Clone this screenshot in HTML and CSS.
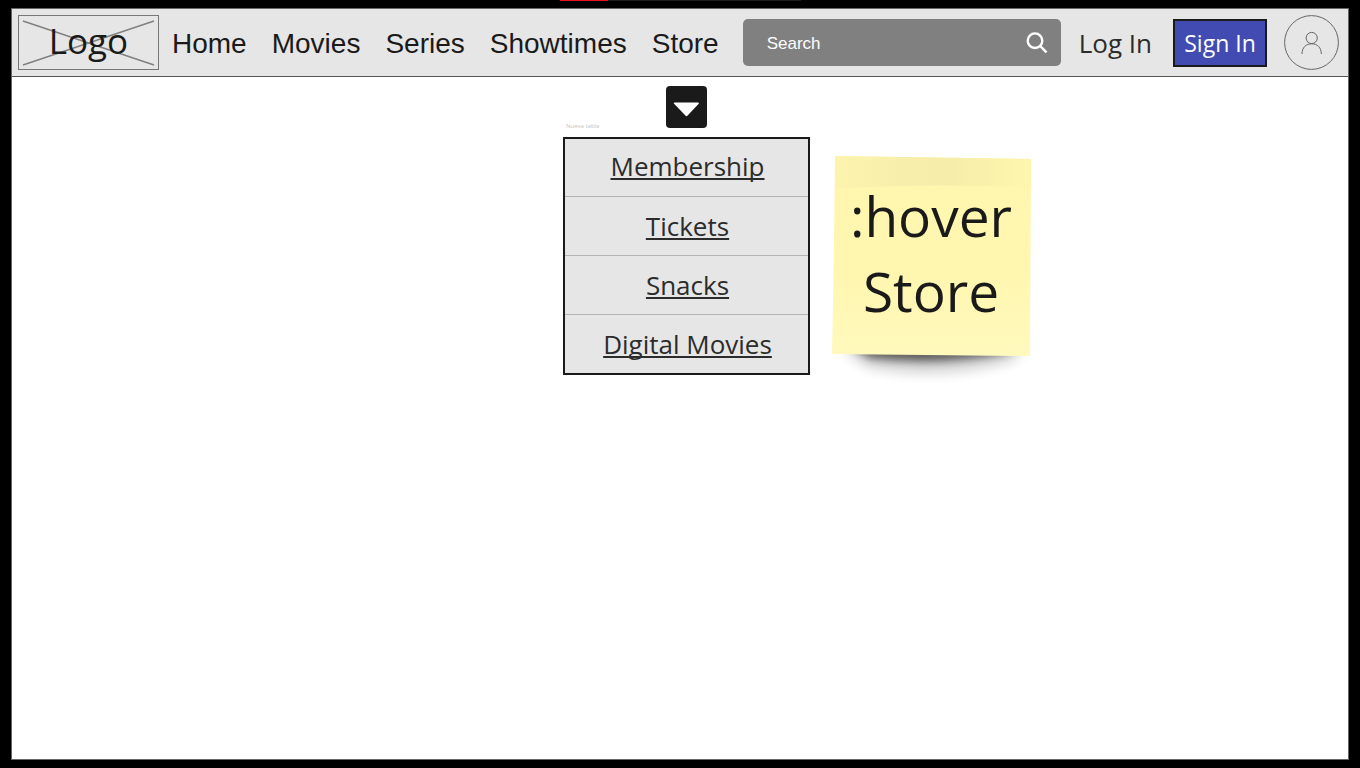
FILE: index.html
```html
<!DOCTYPE html>
<html lang="en">
<head>
<meta charset="utf-8">
<title>Store menu</title>
<link rel="stylesheet" href="styles.css">
</head>
<body>
<div class="progress"><div class="progress-done"></div></div>
<div class="frame">
  <header class="bar">
    <a class="logo" href="#">
      <svg class="logo-cross" viewBox="0 0 139 53" preserveAspectRatio="none" aria-hidden="true"><path d="M4 5L135 49M135 5L4 49"/></svg>
      <span class="logo-text">Logo</span>
    </a>
    <nav class="nav">
      <a href="#">Home</a>
      <a href="#">Movies</a>
      <a href="#">Series</a>
      <a href="#">Showtimes</a>
      <a href="#">Store</a>
    </nav>
    <form class="search">
      <input class="search-input" type="search" placeholder="Search" aria-label="Search">
      <button class="search-button" type="button" aria-label="Search">
        <svg width="22" height="22" viewBox="0 0 22 22"><circle cx="9" cy="8.7" r="7.3"/><path d="M14.2 14L20.5 20.3"/></svg>
      </button>
    </form>
    <a class="login" href="#">Log In</a>
    <button class="signin" type="button">Sign In</button>
    <button class="avatar" type="button" aria-label="Profile">
      <svg width="55" height="55" viewBox="0 0 55 55"><circle cx="27.5" cy="27.5" r="26.9"/><circle cx="27.7" cy="23" r="5.6"/><path d="M18 39C18 32.5 22 28.8 27.7 28.8S37.3 32.5 37.3 39"/></svg>
    </button>
  </header>
  <main class="canvas">
    <section class="dropdown">
      <button class="toggle" type="button" aria-label="Toggle store menu">
        <svg width="41" height="41" viewBox="0 0 41 41"><path d="M8.5 15.5H32C33 15.5 33.2 16.4 32.5 17.1L21.6 28.6Q20.5 29.8 19.4 28.6L8.3 17.1C7.5 16.4 7.7 15.5 8.5 15.5Z"/></svg>
      </button>
      <p class="caption">Nueva tabla</p>
      <ul class="menu">
        <li><a href="#">Membership</a></li>
        <li><a href="#">Tickets</a></li>
        <li><a href="#">Snacks</a></li>
        <li><a href="#">Digital Movies</a></li>
      </ul>
    </section>
    <aside class="note">
      <svg class="note-paper" width="230" height="260" viewBox="0 0 230 260" aria-hidden="true">
        <defs>
          <linearGradient id="paper" x1="0" y1="0" x2="0" y2="1"><stop offset="0" stop-color="#fff6ae"/><stop offset=".6" stop-color="#fff7b0"/><stop offset="1" stop-color="#fff9bc"/></linearGradient>
          <linearGradient id="strip" x1="0" y1="0" x2="1" y2="0"><stop offset="0" stop-color="#fcf4ae"/><stop offset=".35" stop-color="#f6eeaa"/><stop offset=".6" stop-color="#f5eda9"/><stop offset="1" stop-color="#fff6ae"/></linearGradient>
          <filter id="soft" x="-20%" y="-100%" width="140%" height="300%"><feGaussianBlur stdDeviation="6"/></filter>
          <filter id="near" x="-20%" y="-100%" width="140%" height="300%"><feGaussianBlur stdDeviation="4"/></filter>
        </defs>
        <path d="M22 212L205 213L192 222Q120 242 48 228Z" fill="#000" opacity=".16" filter="url(#soft)"/>
        <path d="M26 205L202 207L184 214Q115 226 50 218Z" fill="#000" opacity=".6" filter="url(#near)"/>
        <path d="M15 16L211 19L210 216L12 214Q14 120 15 16Z" fill="url(#paper)"/>
        <path d="M15 16L211 19L211 47Q90 43 15 49Z" fill="url(#strip)"/>
      </svg>
      <p class="note-text">:hover<br>Store</p>
    </aside>
  </main>
</div>
</body>
</html>
```
FILE: styles.css
```css
* { box-sizing: border-box; }
body {
  margin: 0;
  min-height: 100vh;
  display: flex;
  flex-direction: column;
  background: #000;
  color: #1a1a1a;
  font-family: "Open Sans", "Noto Sans", sans-serif;
}
a { color: inherit; text-decoration: none; }
button { padding: 0; border: 0; background: none; color: inherit; font: inherit; cursor: pointer; }
svg { display: block; }

.progress { width: 241px; height: 1px; margin: 0 auto; background: #1c1c1c; }
.progress-done { width: 20%; height: 1px; background: #e81123; }

.frame {
  flex: 1;
  display: flex;
  flex-direction: column;
  margin: 7px 11px 8px;
  border: 1px solid #666;
  background: #fff;
}
.bar {
  display: flex;
  align-items: center;
  height: 68px;
  padding: 0 9px 0 6px;
  background: #e6e6e6;
  border-bottom: 1px solid #555;
}
.logo {
  position: relative;
  display: flex;
  justify-content: center;
  width: 141px;
  height: 55px;
  border: 1px solid #777;
}
.logo-cross { position: absolute; inset: 0; width: 100%; height: 100%; fill: none; stroke: #808080; stroke-width: 1.4; }
.logo-text { position: relative; font-size: 35px; line-height: 50px; }
.nav {
  display: flex;
  gap: 25px;
  margin: 0 24px 0 13px;
  padding-top: 2px;
  font: 28px/32px "Liberation Sans", Arial, sans-serif;
}
.search {
  flex: 1;
  display: flex;
  align-items: center;
  min-width: 0;
  height: 47px;
  padding: 0 13px 0 24px;
  border-radius: 5px;
  background: #808080;
}
.search-input {
  flex: 1;
  min-width: 0;
  padding: 2px 0 0;
  border: 0;
  outline: 0;
  background: none;
  color: #fff;
  font: 17px/20px "Liberation Sans", Arial, sans-serif;
}
.search-input::placeholder { color: #fff; opacity: 1; }
.search-button svg { fill: none; stroke: #fff; stroke-width: 2.4; }
.login { margin: 0 21px 0 18px; color: #2c2c2c; font-size: 26px; line-height: 34px; white-space: nowrap; }
.signin {
  width: 94px;
  height: 48px;
  border: 2px solid #1a1a1a;
  background: #414bb2;
  color: #fff;
  font-size: 23px;
  line-height: 40px;
  white-space: nowrap;
}
.avatar { margin-left: 17px; }
.avatar svg { fill: none; stroke: #666; stroke-width: 1; }

.canvas { display: flex; align-items: flex-start; gap: 10px; padding: 9px 0 0 551px; }
.dropdown { display: grid; width: 247px; }
.toggle { grid-area: 1 / 1; justify-self: center; width: 41px; height: 42px; margin-bottom: 9px; border-radius: 4px; background: #1a1a1a; }
.toggle svg { fill: #fff; }
.caption { grid-area: 1 / 1; align-self: end; justify-self: start; margin: 0 0 7px 3px; font-size: 6px; line-height: 8px; color: #c4c4c4; }
.menu { margin: 0; padding: 0; list-style: none; border: 2px solid #1a1a1a; background: #e6e6e6; }
.menu li { height: 57px; padding: 8px 0 0 2px; text-align: center; color: #2c2c2c; font-size: 26px; line-height: 38px; }
.menu li + li { height: 59px; padding-top: 10px; border-top: 1px solid #b4b4b4; }
.menu a { text-decoration: underline; text-decoration-thickness: 2px; text-underline-offset: 2px; text-decoration-skip-ink: none; }

.note { display: grid; margin-top: 54px; }
.note-paper { grid-area: 1 / 1; }
.note-text { grid-area: 1 / 1; margin: 0; padding: 38px 8px 0 0; text-align: center; font-size: 55px; line-height: 75px; z-index: 1; }
```
